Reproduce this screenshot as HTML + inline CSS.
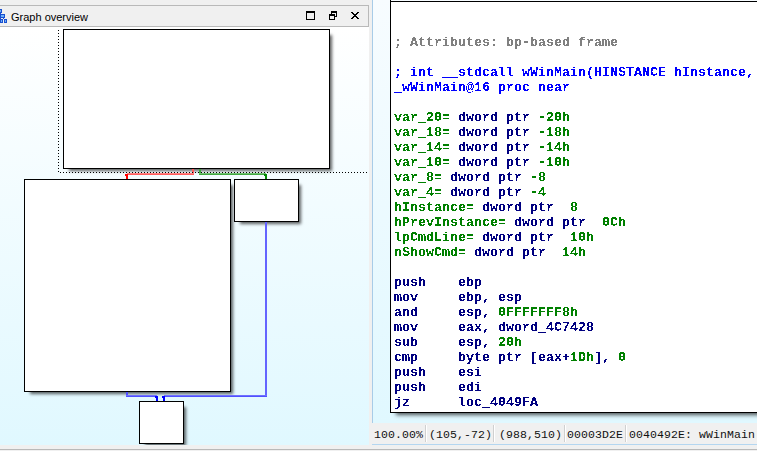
<!DOCTYPE html>
<html><head><meta charset="utf-8">
<style>
*{margin:0;padding:0;box-sizing:border-box}
html,body{width:757px;height:451px;overflow:hidden;background:#f0f0f0;position:relative}
.abs{position:absolute}
#title{left:-2px;top:5px;width:371px;height:22px;border:1px solid #b9b9b9;background:#f0f0f0}
#ttext{left:11px;top:11px;font:11px "Liberation Sans",sans-serif;color:#000;white-space:nowrap}
#graph{left:0;top:27px;width:369px;height:418px;overflow:hidden;background:linear-gradient(#ffffff,#e0f8ff)}
#rpanel{left:372px;top:0;width:385px;height:423px;border-left:1px solid #a8cce8;background:linear-gradient(#f7fcff,#e0f8ff)}
.node{position:absolute;background:#fff;border:1px solid #000;box-shadow:4px 4px 3px -2px rgba(0,0,0,0.62)}
#code{left:390px;top:1px;width:400px;height:412px;background:#fff;border:1px solid #000;box-shadow:4px 4px 4px -2px rgba(0,0,0,0.66)}
#pre{left:3px;top:33px;filter:url(#crisp);font:bold 13.333px/15px "Liberation Mono",monospace;white-space:pre;color:#000080}
.g{color:#808080}.b{color:#0000ff}.gr{color:#008000}
#status{left:372px;top:423px;width:385px;height:22px;border-bottom:1px solid #b4d6f0;background:#f0f0f0}
.st{position:absolute;top:4px;font:11.5px/15px "Liberation Mono",monospace;letter-spacing:0.1px;color:#111;white-space:pre}
.sep{position:absolute;top:2px;width:2px;height:17px;border-left:1px solid #d0d0d0;border-right:1px solid #fff}
</style></head><body>
<svg width="0" height="0" style="position:absolute"><filter id="crisp" color-interpolation-filters="sRGB"><feComponentTransfer><feFuncA type="discrete" tableValues="0 0 1 1"/></feComponentTransfer></filter></svg>
<div id="title" class="abs"></div>
<svg class="abs" style="left:0;top:0" width="12" height="27" shape-rendering="crispEdges">
<g fill="#1a4fd0">
<rect x="0" y="9" width="2" height="4"/>
<rect x="0" y="13" width="1" height="1"/>
<rect x="0" y="14" width="5" height="4"/>
<rect x="0" y="18" width="1" height="1"/>
<rect x="3" y="18" width="1" height="1"/>
<rect x="0" y="19" width="3" height="4"/>
<rect x="4" y="19" width="3" height="4"/>
</g>
<g fill="#6ab0f8">
<rect x="0" y="10" width="1" height="2"/>
<rect x="1" y="15" width="3" height="2"/>
<rect x="1" y="20" width="1" height="2"/>
<rect x="5" y="20" width="1" height="2"/>
</g>
</svg>
<svg class="abs" style="left:300px;top:5px" width="68" height="22" shape-rendering="crispEdges">
<g fill="#000">
<rect x="6" y="6" width="9" height="2"/><rect x="6" y="8" width="1" height="6"/><rect x="14" y="8" width="1" height="6"/><rect x="6" y="14" width="9" height="1"/>
<rect x="31" y="6" width="6" height="2"/><rect x="31" y="8" width="1" height="1"/><rect x="36" y="8" width="1" height="4"/><rect x="35" y="11" width="2" height="1"/>
<rect x="29" y="9" width="6" height="2"/><rect x="29" y="11" width="1" height="3"/><rect x="34" y="11" width="1" height="3"/><rect x="29" y="14" width="6" height="1"/>
<rect x="51" y="7" width="1" height="1"/><rect x="52" y="7" width="1" height="1"/><rect x="57" y="7" width="1" height="1"/><rect x="58" y="7" width="1" height="1"/><rect x="52" y="8" width="1" height="1"/><rect x="53" y="8" width="1" height="1"/><rect x="56" y="8" width="1" height="1"/><rect x="57" y="8" width="1" height="1"/><rect x="53" y="9" width="1" height="1"/><rect x="54" y="9" width="1" height="1"/><rect x="55" y="9" width="1" height="1"/><rect x="56" y="9" width="1" height="1"/><rect x="54" y="10" width="1" height="1"/><rect x="55" y="10" width="1" height="1"/><rect x="53" y="11" width="1" height="1"/><rect x="54" y="11" width="1" height="1"/><rect x="55" y="11" width="1" height="1"/><rect x="56" y="11" width="1" height="1"/><rect x="52" y="12" width="1" height="1"/><rect x="53" y="12" width="1" height="1"/><rect x="56" y="12" width="1" height="1"/><rect x="57" y="12" width="1" height="1"/><rect x="51" y="13" width="1" height="1"/><rect x="52" y="13" width="1" height="1"/><rect x="57" y="13" width="1" height="1"/><rect x="58" y="13" width="1" height="1"/>
</g>
</svg>
<div id="ttext" class="abs">Graph overview</div>
<div id="graph" class="abs">

<div class="node" style="left:63px;top:2px;width:267px;height:140px"></div>
<div class="node" style="left:24px;top:152px;width:207px;height:213px"></div>
<div class="node" style="left:234px;top:152px;width:65px;height:43px"></div>
<div class="node" style="left:139px;top:374px;width:45px;height:43px"></div>
<svg class="abs" style="left:0;top:-27px" width="369" height="445" shape-rendering="crispEdges">
<rect x="192" y="169" width="2" height="6" fill="#ff5c5c"/>
<rect x="127" y="173" width="67" height="1" fill="#ff8080"/>
<rect x="127" y="174" width="67" height="1" fill="#ff5c5c"/>
<path d="M125,174H128V179H126V176H125Z" fill="#ff0000"/>
<rect x="199" y="169" width="2" height="6" fill="#40a840"/>
<rect x="199" y="173" width="67" height="1" fill="#70c070"/>
<rect x="199" y="174" width="67" height="1" fill="#40a840"/>
<path d="M264,174H267V179H265V176H264Z" fill="#008800"/>
<rect x="126" y="392" width="2" height="5" fill="#5050ff"/>
<rect x="126" y="395" width="31" height="1" fill="#7070ff"/>
<rect x="126" y="396" width="31" height="1" fill="#5050ff"/>
<path d="M155,396H158V401H156V398H155Z" fill="#0000ff"/>
<rect x="265" y="222" width="2" height="175" fill="#6464ff"/>
<rect x="164" y="395" width="103" height="1" fill="#7070ff"/>
<rect x="164" y="396" width="103" height="1" fill="#5050ff"/>
<path d="M162,396H165V401H163V398H162Z" fill="#0000ff"/>
</svg>
<svg class="abs" style="left:0;top:-27px" width="369" height="445" shape-rendering="crispEdges">
<g fill="#000">
<rect x="58" y="30" width="1" height="1"/>
<rect x="58" y="33" width="1" height="1"/>
<rect x="58" y="36" width="1" height="1"/>
<rect x="58" y="39" width="1" height="1"/>
<rect x="58" y="42" width="1" height="1"/>
<rect x="58" y="45" width="1" height="1"/>
<rect x="58" y="48" width="1" height="1"/>
<rect x="58" y="51" width="1" height="1"/>
<rect x="58" y="54" width="1" height="1"/>
<rect x="58" y="57" width="1" height="1"/>
<rect x="58" y="60" width="1" height="1"/>
<rect x="58" y="63" width="1" height="1"/>
<rect x="58" y="66" width="1" height="1"/>
<rect x="58" y="69" width="1" height="1"/>
<rect x="58" y="72" width="1" height="1"/>
<rect x="58" y="75" width="1" height="1"/>
<rect x="58" y="78" width="1" height="1"/>
<rect x="58" y="81" width="1" height="1"/>
<rect x="58" y="84" width="1" height="1"/>
<rect x="58" y="87" width="1" height="1"/>
<rect x="58" y="90" width="1" height="1"/>
<rect x="58" y="93" width="1" height="1"/>
<rect x="58" y="96" width="1" height="1"/>
<rect x="58" y="99" width="1" height="1"/>
<rect x="58" y="102" width="1" height="1"/>
<rect x="58" y="105" width="1" height="1"/>
<rect x="58" y="108" width="1" height="1"/>
<rect x="58" y="111" width="1" height="1"/>
<rect x="58" y="114" width="1" height="1"/>
<rect x="58" y="117" width="1" height="1"/>
<rect x="58" y="120" width="1" height="1"/>
<rect x="58" y="123" width="1" height="1"/>
<rect x="58" y="126" width="1" height="1"/>
<rect x="58" y="129" width="1" height="1"/>
<rect x="58" y="132" width="1" height="1"/>
<rect x="58" y="135" width="1" height="1"/>
<rect x="58" y="138" width="1" height="1"/>
<rect x="58" y="141" width="1" height="1"/>
<rect x="58" y="144" width="1" height="1"/>
<rect x="58" y="147" width="1" height="1"/>
<rect x="58" y="150" width="1" height="1"/>
<rect x="58" y="153" width="1" height="1"/>
<rect x="58" y="156" width="1" height="1"/>
<rect x="58" y="159" width="1" height="1"/>
<rect x="58" y="162" width="1" height="1"/>
<rect x="58" y="165" width="1" height="1"/>
<rect x="58" y="168" width="1" height="1"/>
<rect x="58" y="171" width="1" height="1"/>
<rect x="60" y="172" width="1" height="1"/>
<rect x="63" y="172" width="1" height="1"/>
<rect x="66" y="172" width="1" height="1"/>
<rect x="69" y="172" width="1" height="1"/>
<rect x="72" y="172" width="1" height="1"/>
<rect x="75" y="172" width="1" height="1"/>
<rect x="78" y="172" width="1" height="1"/>
<rect x="81" y="172" width="1" height="1"/>
<rect x="84" y="172" width="1" height="1"/>
<rect x="87" y="172" width="1" height="1"/>
<rect x="90" y="172" width="1" height="1"/>
<rect x="93" y="172" width="1" height="1"/>
<rect x="96" y="172" width="1" height="1"/>
<rect x="99" y="172" width="1" height="1"/>
<rect x="102" y="172" width="1" height="1"/>
<rect x="105" y="172" width="1" height="1"/>
<rect x="108" y="172" width="1" height="1"/>
<rect x="111" y="172" width="1" height="1"/>
<rect x="114" y="172" width="1" height="1"/>
<rect x="117" y="172" width="1" height="1"/>
<rect x="120" y="172" width="1" height="1"/>
<rect x="123" y="172" width="1" height="1"/>
<rect x="126" y="172" width="1" height="1"/>
<rect x="129" y="172" width="1" height="1"/>
<rect x="132" y="172" width="1" height="1"/>
<rect x="135" y="172" width="1" height="1"/>
<rect x="138" y="172" width="1" height="1"/>
<rect x="141" y="172" width="1" height="1"/>
<rect x="144" y="172" width="1" height="1"/>
<rect x="147" y="172" width="1" height="1"/>
<rect x="150" y="172" width="1" height="1"/>
<rect x="153" y="172" width="1" height="1"/>
<rect x="156" y="172" width="1" height="1"/>
<rect x="159" y="172" width="1" height="1"/>
<rect x="162" y="172" width="1" height="1"/>
<rect x="165" y="172" width="1" height="1"/>
<rect x="168" y="172" width="1" height="1"/>
<rect x="171" y="172" width="1" height="1"/>
<rect x="174" y="172" width="1" height="1"/>
<rect x="177" y="172" width="1" height="1"/>
<rect x="180" y="172" width="1" height="1"/>
<rect x="183" y="172" width="1" height="1"/>
<rect x="186" y="172" width="1" height="1"/>
<rect x="189" y="172" width="1" height="1"/>
<rect x="192" y="172" width="1" height="1"/>
<rect x="195" y="172" width="1" height="1"/>
<rect x="198" y="172" width="1" height="1"/>
<rect x="201" y="172" width="1" height="1"/>
<rect x="204" y="172" width="1" height="1"/>
<rect x="207" y="172" width="1" height="1"/>
<rect x="210" y="172" width="1" height="1"/>
<rect x="213" y="172" width="1" height="1"/>
<rect x="216" y="172" width="1" height="1"/>
<rect x="219" y="172" width="1" height="1"/>
<rect x="222" y="172" width="1" height="1"/>
<rect x="225" y="172" width="1" height="1"/>
<rect x="228" y="172" width="1" height="1"/>
<rect x="231" y="172" width="1" height="1"/>
<rect x="234" y="172" width="1" height="1"/>
<rect x="237" y="172" width="1" height="1"/>
<rect x="240" y="172" width="1" height="1"/>
<rect x="243" y="172" width="1" height="1"/>
<rect x="246" y="172" width="1" height="1"/>
<rect x="249" y="172" width="1" height="1"/>
<rect x="252" y="172" width="1" height="1"/>
<rect x="255" y="172" width="1" height="1"/>
<rect x="258" y="172" width="1" height="1"/>
<rect x="261" y="172" width="1" height="1"/>
<rect x="264" y="172" width="1" height="1"/>
<rect x="267" y="172" width="1" height="1"/>
<rect x="270" y="172" width="1" height="1"/>
<rect x="273" y="172" width="1" height="1"/>
<rect x="276" y="172" width="1" height="1"/>
<rect x="279" y="172" width="1" height="1"/>
<rect x="282" y="172" width="1" height="1"/>
<rect x="285" y="172" width="1" height="1"/>
<rect x="288" y="172" width="1" height="1"/>
<rect x="291" y="172" width="1" height="1"/>
<rect x="294" y="172" width="1" height="1"/>
<rect x="297" y="172" width="1" height="1"/>
<rect x="300" y="172" width="1" height="1"/>
<rect x="303" y="172" width="1" height="1"/>
<rect x="306" y="172" width="1" height="1"/>
<rect x="309" y="172" width="1" height="1"/>
<rect x="312" y="172" width="1" height="1"/>
<rect x="315" y="172" width="1" height="1"/>
<rect x="318" y="172" width="1" height="1"/>
<rect x="321" y="172" width="1" height="1"/>
<rect x="324" y="172" width="1" height="1"/>
<rect x="327" y="172" width="1" height="1"/>
<rect x="330" y="172" width="1" height="1"/>
<rect x="333" y="172" width="1" height="1"/>
<rect x="336" y="172" width="1" height="1"/>
<rect x="339" y="172" width="1" height="1"/>
<rect x="342" y="172" width="1" height="1"/>
<rect x="345" y="172" width="1" height="1"/>
<rect x="348" y="172" width="1" height="1"/>
<rect x="351" y="172" width="1" height="1"/>
<rect x="354" y="172" width="1" height="1"/>
<rect x="357" y="172" width="1" height="1"/>
<rect x="360" y="172" width="1" height="1"/>
<rect x="363" y="172" width="1" height="1"/>
<rect x="366" y="172" width="1" height="1"/>
</g>
</svg>
</div>
<div id="rpanel" class="abs"></div>
<div id="code" class="abs"><div id="pre" class="abs"><span class="g">; Attributes: bp-based frame</span>

<span class="b">; int __stdcall wWinMain(HINSTANCE hInstance, HINSTANCE hPrevInstance, LPWSTR lpCmdLine, int nShowCmd)</span>
<span class="b">_wWinMain@16 proc near</span>

<span class="gr">var_20=</span> dword ptr <span class="gr">-20h</span>
<span class="gr">var_18=</span> dword ptr <span class="gr">-18h</span>
<span class="gr">var_14=</span> dword ptr <span class="gr">-14h</span>
<span class="gr">var_10=</span> dword ptr <span class="gr">-10h</span>
<span class="gr">var_8=</span> dword ptr <span class="gr">-8</span>
<span class="gr">var_4=</span> dword ptr <span class="gr">-4</span>
<span class="gr">hInstance=</span> dword ptr  <span class="gr">8</span>
<span class="gr">hPrevInstance=</span> dword ptr  <span class="gr">0Ch</span>
<span class="gr">lpCmdLine=</span> dword ptr  <span class="gr">10h</span>
<span class="gr">nShowCmd=</span> dword ptr  <span class="gr">14h</span>

push    ebp
mov     ebp, esp
and     esp, <span class="gr">0FFFFFFF8h</span>
mov     eax, dword_4C7428
sub     esp, <span class="gr">20h</span>
cmp     byte ptr [eax+<span class="gr">1Dh</span>], <span class="gr">0</span>
push    esi
push    edi
jz      loc_4049FA</div></div>
<div id="status" class="abs">
<div class="st" style="left:2px">100.00%</div>
<div class="sep" style="left:53px"></div>
<div class="st" style="left:57px">(105,-72)</div>
<div class="sep" style="left:121px"></div>
<div class="st" style="left:127px">(988,510)</div>
<div class="sep" style="left:192px"></div>
<div class="st" style="left:195px">00003D2E</div>
<div class="sep" style="left:253px"></div>
<div class="st" style="left:257px">0040492E: wWinMain</div>
</div>
<div class="abs" style="left:0;top:449px;width:757px;height:1px;background:#b9b9b9"></div>
<div class="abs" style="left:390px;top:0;width:1px;height:1px;background:#000"></div>
</body></html>
